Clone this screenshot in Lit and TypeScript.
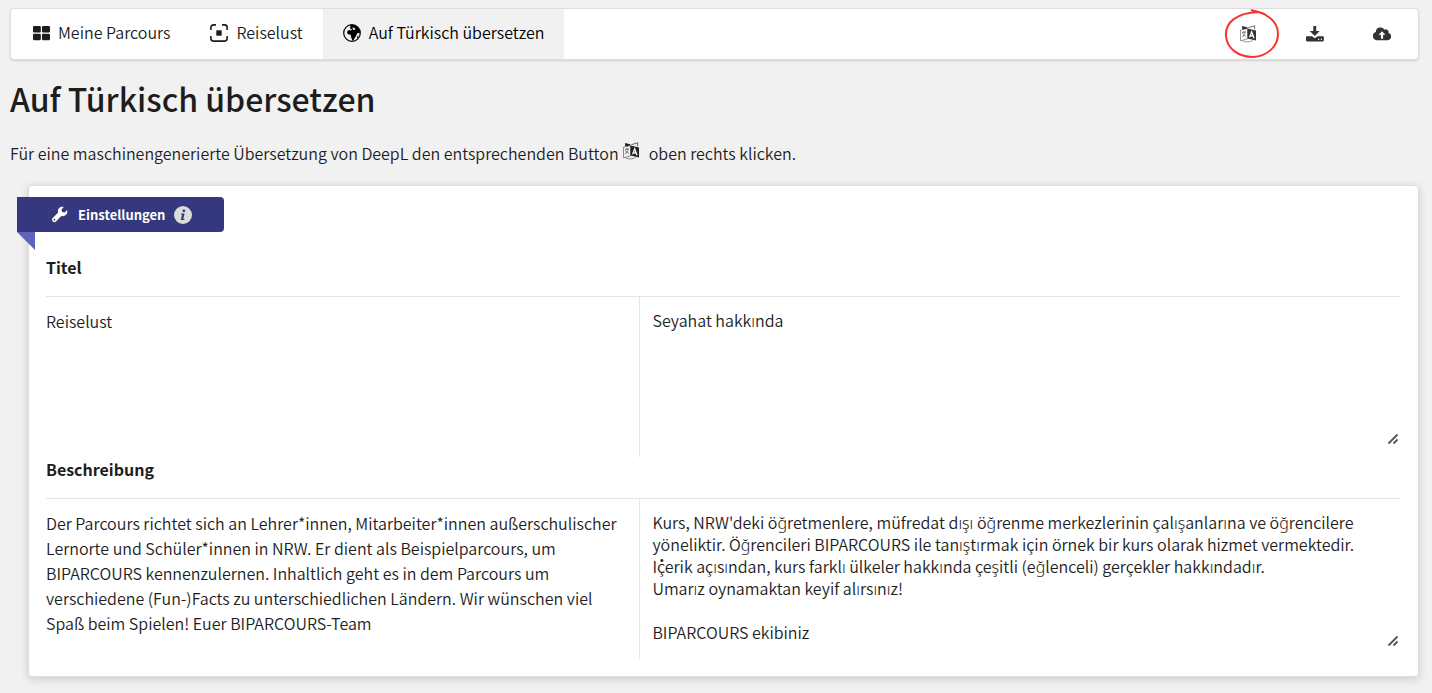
import { LitElement, html, css, svg } from "lit";
import { customElement, property } from "lit/decorators.js";

const shapes: Record<string, unknown> = {
  grid: svg`<rect x="1" y="2" width="7.8" height="6.5" rx="1.2"/><rect x="10" y="2" width="8" height="6.5" rx="1.2"/><rect x="1" y="9.800" width="7.8" height="6.5" rx="1.2"/><rect x="10" y="9.800" width="8" height="6.5" rx="1.2"/>`,
  focus: svg`<path d="M.9 6V3.4A2.500 2.500 0 0 1 3.400.9H6M12 .9h2.600A2.500 2.500 0 0 1 17.100 3.400V6M.9 12v2.600a2.500 2.500 0 0 0 2.500 2.500h11.200a2.500 2.500 0 0 0 2.500-2.500V12" fill="none" stroke="currentColor" stroke-width="1.6"/><rect x="6.300" y="6.300" width="5.400" height="5.400"/>`,
  globe: svg`<circle cx="9" cy="9" r="8.300" fill="none" stroke="currentColor" stroke-width="1.200"/><path d="M6.500 1.500 9 .8l3 .6 3.500 2.600 1.800 4-.8 1.500-1.300-.8-1.200 1-.8 2-1.800 2.700-1 2.100H9.200l-.4-2-.9-1.300.3-1.500L7 10.600l-2-.3-1-1.500.6-2 1.800-.8 2 .4.600-1-1.500-.6-.9-1.200 1.300-.5z"/><path d="M9.600 3.200l1.400.8 1.300-.5-.7 1.500 1 .7-1.600.4-1.300-.8z" fill="#f1f1f1"/><path d="M14.300 11.800l1 .4-.4 1.600-.9.600z"/>`,
  translate: svg`<path d="M1.500 5.200 8.600 3.600v10.200L1.500 15.800z" fill="none" stroke="currentColor" stroke-width=".5"/><path d="M8.500 3.400 17 5.600v9.800L8.500 13.400z"/><path d="M3 .9 8.300 2.300v1.300L3.200 4.600z"/><path d="M9.300 2.800 15.600.7v3.600" fill="none" stroke="currentColor" stroke-width=".7"/><path d="M3 7.600 6.800 6.800M4.800 6v1.200M6.200 7c-.5 2.200-1.500 3.800-3.300 5M3.600 8.400c.6 1.300 1.700 2.300 3.300 3" fill="none" stroke="currentColor" stroke-width=".6"/><path d="m10.600 12.200 2.100-5.400 2.300 6.500M11.300 10.600l2.900.6" fill="none" stroke="#fff" stroke-width="1.300"/><path d="M3.500 15.800c2.700 1.600 7.300 1.600 10.200-.4" fill="none" stroke="currentColor" stroke-width=".5"/>`,
  download: svg`<path d="M7.300 1h2.900v5h3.500L8.800 11 3.800 6h3.500zM1.200 11.200h4.700l2.900 2 3-2h4.900c.7 0 1.200.5 1.200 1.200v2.800c0 .7-.5 1.200-1.200 1.200H1.200c-.7 0-1.200-.5-1.200-1.200v-2.800c0-.7.5-1.200 1.200-1.200z"/><circle cx="12.700" cy="14.200" r=".7" fill="#fff"/><circle cx="15.400" cy="14.200" r=".7" fill="#fff"/>`,
  upload: svg`<path d="M4.200 15.200A4.200 4.200 0 0 1 2.800 7a4.700 4.700 0 0 1 8.700-2.300 2.800 2.800 0 0 1 3.900 3.400A3.600 3.600 0 0 1 14.500 15.200z"/><path d="M7.900 13.700v-3.900H5.500L9 6.300l3.500 3.500h-2.400v3.900z" fill="#fff"/>`,
  wrench: svg`<path d="M16.100 4.100 13.600 6.500l-2.500-.6-.6-2.500L12.800 1A4.600 4.600 0 0 0 7 6.800L1.700 12a2.300 2.300 0 0 0 3.300 3.400L10.300 10a4.600 4.600 0 0 0 5.800-5.900zM3.400 14.600a.9.900 0 1 1 0-1.800.9.900 0 0 1 0 1.800z"/>`,
  info: svg`<circle cx="9" cy="9" r="9" fill="#dcdcdc"/><circle cx="9.900" cy="4.800" r="1.400" fill="#35387f"/><path d="M7.100 7.400h3.500L9.300 12.900h1.300l-.3 1.100H6.800l1.300-5.500H6.900z" fill="#35387f"/>`,
};

@customElement("ui-icon")
export class UiIcon extends LitElement {
  @property() name = "grid";

  static styles = css`
    :host { display: inline-block; width: 18px; height: 18px; }
    .glyph { display: block; width: 100%; height: 100%; fill: currentColor; }
  `;

  render() {
    return html`<svg class="glyph" viewBox="0 0 18 18" aria-hidden="true">${shapes[this.name]}</svg>`;
  }
}

interface Field {
  id: string;
  label: string;
  source: string;
  target: string;
}

const fields: Field[] = [
  { id: "titel", label: "Titel", source: "Reiselust", target: "Seyahat hakkında" },
  {
    id: "beschreibung",
    label: "Beschreibung",
    source:
      "Der Parcours richtet sich an Lehrer*innen, Mitarbeiter*innen außerschulischer Lernorte und Schüler*innen in NRW. Er dient als Beispielparcours, um BIPARCOURS kennenzulernen. Inhaltlich geht es in dem Parcours um verschiedene (Fun-)Facts zu unterschiedlichen Ländern. Wir wünschen viel Spaß beim Spielen! Euer BIPARCOURS-Team",
    target:
      "Kurs, NRW'deki öğretmenlere, müfredat dışı öğrenme merkezlerinin çalışanlarına ve öğrencilere yöneliktir. Öğrencileri BIPARCOURS ile tanıştırmak için örnek bir kurs olarak hizmet vermektedir.\nİçerik açısından, kurs farklı ülkeler hakkında çeşitli (eğlenceli) gerçekler hakkındadır.\nUmarız oynamaktan keyif alırsınız!\n\nBIPARCOURS ekibiniz",
  },
];

@customElement("app-root")
export class AppRoot extends LitElement {
  static styles = css`
    :host {
      display: block;
      box-sizing: border-box;
      min-height: 100vh;
      padding: 8px 13px 16px 10px;
      background: #f1f1f1;
      color: #1d1d1d;
      font: 350 16px/25px "Noto Sans CJK SC", "Noto Sans", sans-serif;
    }
    * { box-sizing: border-box; }
    .menu {
      display: flex;
      height: 52px;
      background: #fff;
      border: 1px solid #dededf;
      border-radius: 4px;
      box-shadow: 0 1px 2px rgba(34, 36, 38, 0.15);
    }
    .item {
      display: flex;
      align-items: center;
      gap: 8px;
      padding: 0 20px 3px 20px;
      color: #1d1d1d;
      text-decoration: none;
    }
    .item:first-child { padding-left: 21px; }
    .item.active { background: #f1f1f1; color: #000; }
    .actions { display: flex; margin-left: auto; padding-right: 3px; }
    .action {
      position: relative;
      display: grid;
      place-items: center;
      width: 67px;
      padding: 0;
      border: 0;
      background: none;
      color: #333;
      cursor: pointer;
    }
    .mark {
      position: absolute;
      top: 0;
      left: 10px;
      width: 56px;
      height: 50px;
      fill: none;
      stroke: #f8352c;
      stroke-width: 2;
      overflow: visible;
    }
    h1 { margin: 18px 0 22px; font-size: 32px; line-height: 41px; font-weight: 500; }
    .hint { margin: 0 0 19px; }
    .inline { margin: 0 5px 0 0; color: #222; }
    .card {
      margin-left: 18px;
      padding: 11px 18px 17px 17px;
      border: 1px solid #dededf;
      border-radius: 4px;
      background: #fff;
      box-shadow: 0 2px 8px rgba(34, 36, 38, 0.18);
    }
    .ribbon {
      position: relative;
      display: flex;
      align-items: center;
      width: 207px;
      height: 35px;
      margin: 0 0 23px -29px;
      padding: 0 30px 0 34px;
      gap: 9px;
      border-radius: 0 4px 4px 0;
      background: #35387f;
      color: #fff;
      font-size: 13px;
      font-weight: 700;
    }
    .ribbon::after {
      content: "";
      position: absolute;
      top: 100%;
      left: 0;
      border: solid transparent;
      border-width: 0 18px 18px 0;
      border-right-color: #5e63bd;
    }
    .label {
      display: block;
      padding-bottom: 16px;
      border-bottom: 1px solid #e5e5e6;
      font-weight: 700;
    }
    .pair { display: grid; grid-template-columns: 18fr 23fr; min-height: 160px; }
    .source { margin: 0; padding: 12px 12px 0 0; border-right: 1px solid #e5e5e6; }
    .target {
      display: block;
      width: 100%;
      height: 149px;
      padding: 12px;
      border: 0;
      outline: 0;
      resize: vertical;
      background: transparent;
      color: inherit;
      font: inherit;
      line-height: 22px;
    }
    .target::-webkit-resizer {
      background: url("data:image/svg+xml,%3Csvg xmlns='http://www.w3.org/2000/svg' width='15' height='15'%3E%3Cpath d='M3.500 12.500l9-9M8.500 12.500l4-4' stroke='%23555' stroke-width='1.800'/%3E%3C/svg%3E") no-repeat right bottom;
    }
  `;

  render() {
    return html`
      <nav class="menu">
        <a class="item" href="#parcours"><ui-icon name="grid"></ui-icon>Meine Parcours</a>
        <a class="item" href="#reiselust"><ui-icon name="focus"></ui-icon>Reiselust</a>
        <a class="item active" href="#tr" aria-current="page"><ui-icon name="globe"></ui-icon>Auf Türkisch übersetzen</a>
        <div class="actions">
          <button class="action" aria-label="Übersetzen">
            <ui-icon name="translate"></ui-icon>
            <svg class="mark" viewBox="0 0 56 50" aria-hidden="true">
              <path d="M27 1C33 3 39 3 43 7C50 11 54 18 54 25C54 37 44 47 29 48C15 48 3 40 2 27C1 13 13 4 34 3"/>
            </svg>
          </button>
          <button class="action" aria-label="Herunterladen"><ui-icon name="download"></ui-icon></button>
          <button class="action" aria-label="Hochladen"><ui-icon name="upload"></ui-icon></button>
        </div>
      </nav>
      <main>
        <h1>Auf Türkisch übersetzen</h1>
        <p class="hint">Für eine maschinengenerierte Übersetzung von DeepL den entsprechenden Button <ui-icon class="inline" name="translate"></ui-icon> oben rechts klicken.</p>
        <section class="card">
          <div class="ribbon"><ui-icon name="wrench"></ui-icon>Einstellungen<ui-icon name="info"></ui-icon></div>
          ${fields.map(
            (f) => html`
              <label class="label" for=${f.id}>${f.label}</label>
              <div class="pair">
                <p class="source">${f.source}</p>
                <div><textarea class="target" id=${f.id} spellcheck="false" .value=${f.target}></textarea></div>
              </div>
            `
          )}
        </section>
      </main>
    `;
  }
}
